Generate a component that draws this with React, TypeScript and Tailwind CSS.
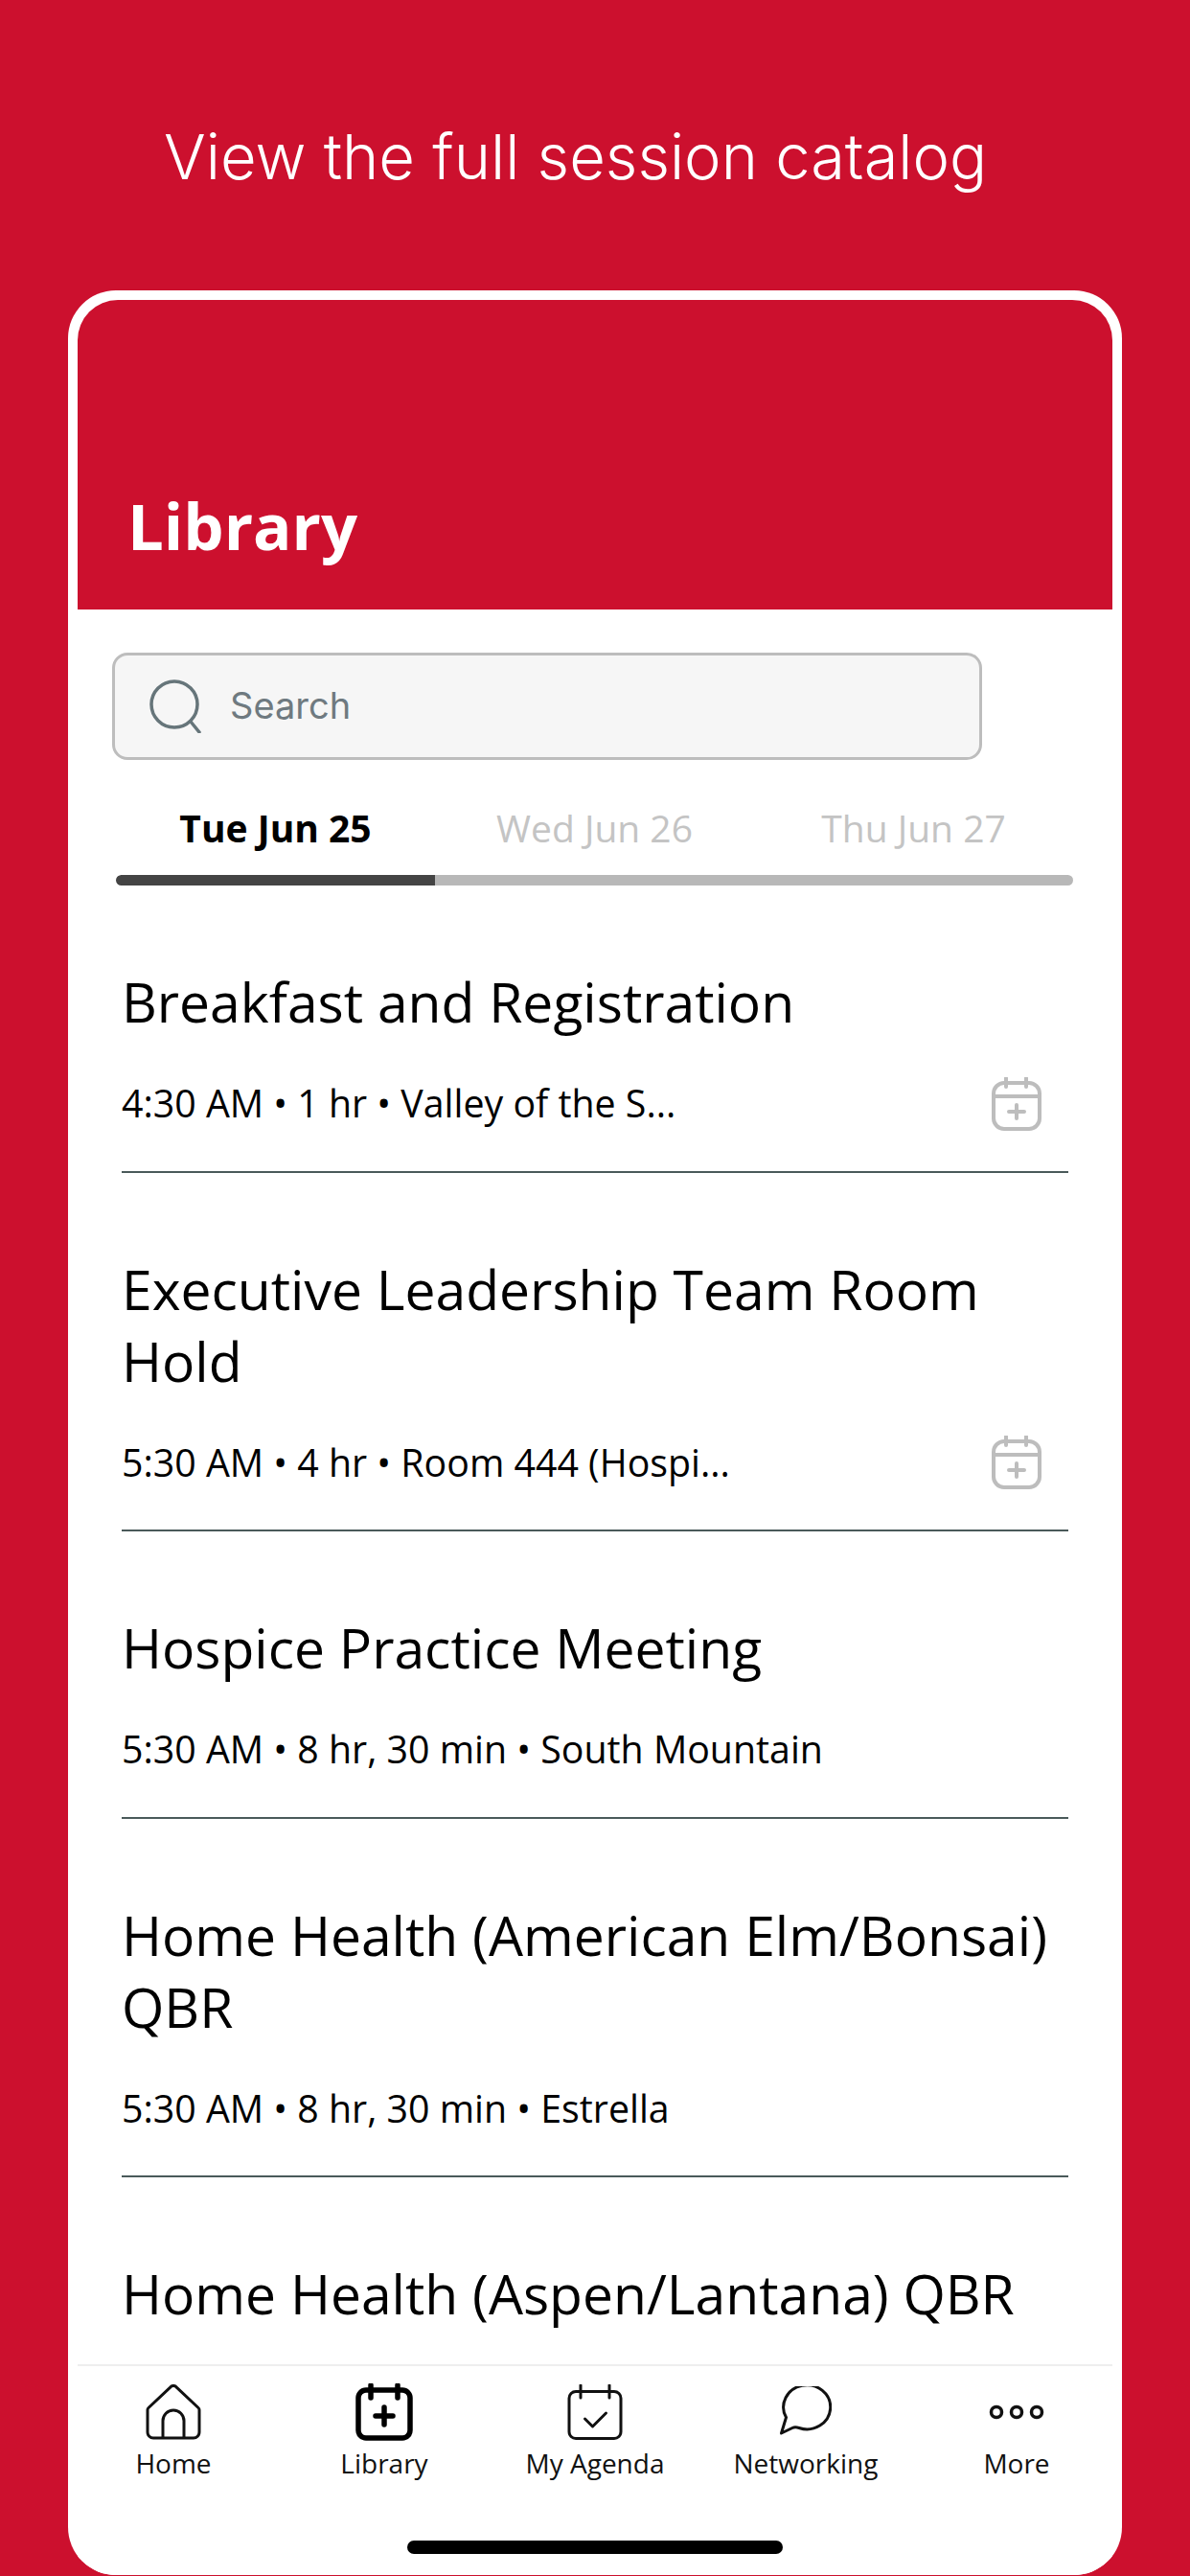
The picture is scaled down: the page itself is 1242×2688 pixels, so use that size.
import React from "react";

const sessions = [
  { title: "Breakfast and Registration", meta: "4:30 AM • 1 hr • Valley of the S...", add: true },
  { title: "Executive Leadership Team Room Hold", meta: "5:30 AM • 4 hr • Room 444 (Hospi...", add: true },
  { title: "Hospice Practice Meeting", meta: "5:30 AM • 8 hr, 30 min • South Mountain", add: false },
  { title: "Home Health (American Elm/Bonsai) QBR", meta: "5:30 AM • 8 hr, 30 min • Estrella", add: false },
  { title: "Home Health (Aspen/Lantana) QBR", meta: "", add: false },
];

const HomeIcon = () => (
  <svg width="58" height="58" viewBox="0 0 58 58" fill="none" stroke="#111" strokeWidth="3" strokeLinejoin="round">
    <path d="M3 24.500 26 2.800a4 4 0 0 1 6 0L55 24.500a3 3 0 0 1 1 2.300V50a6 6 0 0 1-6 6H8a6 6 0 0 1-6-6V26.800a3 3 0 0 1 1-2.300Z" />
    <path d="M18 56V38a11 11 0 0 1 22 0v18" />
  </svg>
);

const LibraryIcon = () => (
  <svg width="60" height="60" viewBox="0 0 60 60" fill="none" stroke="#000" strokeLinecap="round">
    <rect x="3" y="7" width="54" height="50" rx="8" strokeWidth="5.500" />
    <path d="M16 2v13M44 2v13" strokeWidth="5.500" />
    <path d="M30 25v18M21 34h18" strokeWidth="5.500" />
  </svg>
);

const AgendaIcon = () => (
  <svg width="58" height="58" viewBox="0 0 58 58" fill="none" stroke="#111" strokeWidth="3" strokeLinecap="round" strokeLinejoin="round">
    <rect x="2" y="7.500" width="54" height="49" rx="7" />
    <path d="M14 1v13M44 1v13" />
    <path d="M18.500 36l8 8 14-14" />
  </svg>
);

const ChatIcon = () => (
  <svg width="54" height="54" viewBox="0 0 54 54" fill="none" stroke="#111" strokeWidth="3" strokeLinejoin="round">
    <path d="M1.500 49 6.500 32.500A24.500 23 0 1 1 20 43.500C17 42.500 15 42.500 13 43.500Z" />
  </svg>
);

const MoreIcon = () => (
  <svg width="58" height="58" viewBox="0 0 58 58" fill="none" stroke="#111" strokeWidth="3.500">
    <circle cx="8" cy="29" r="5.500" />
    <circle cx="29" cy="29" r="5.500" />
    <circle cx="50" cy="29" r="5.500" />
  </svg>
);

const AddToAgenda = () => (
  <svg width="52" height="56" viewBox="0 0 52 56" fill="none" stroke="#bdbdbd" strokeWidth="4" strokeLinecap="round">
    <rect x="2" y="6" width="48" height="48" rx="11" />
    <path d="M15 1v9M36 1v9" />
    <path d="M2 20h48" strokeLinecap="butt" />
    <path d="M26 29v14M18 36h16" />
  </svg>
);

const tabs = [
  { label: "Home", icon: <HomeIcon /> },
  { label: "Library", icon: <LibraryIcon /> },
  { label: "My Agenda", icon: <AgendaIcon /> },
  { label: "Networking", icon: <ChatIcon /> },
  { label: "More", icon: <MoreIcon /> },
];

export default function App() {
  return (
    <div className="h-[2688px] w-[1242px] flex flex-col overflow-hidden bg-[#cc102e] font-['Open_Sans',sans-serif]">
      <div className="h-[303px] shrink-0 pt-[124px] pl-[171px] font-['Inter',sans-serif] text-[65px] font-light leading-[80px] text-white">
        View the full session catalog
      </div>

      <div className="mx-[71px] mb-px flex min-h-0 flex-1 flex-col overflow-hidden rounded-[50px] bg-white">
        <header className="mx-[10px] mt-[10px] flex h-[323px] shrink-0 items-end rounded-t-[42px] bg-[#cc102e] pb-[42px] pl-[52px]">
          <h1 className="text-[67px] font-bold leading-[92px] text-white">Library</h1>
        </header>

        <div className="mt-[45px] ml-[46px] flex h-[112px] w-[908px] shrink-0 items-center rounded-[16px] border-[3px] border-[#bdbdbd] bg-[#f6f6f6] pl-[36px]">
          <svg width="56" height="56" viewBox="0 0 56 56" fill="none" stroke="#66757a" strokeWidth="3.500" strokeLinecap="round">
            <circle cx="26" cy="26" r="24" />
            <path d="M43 44l9 11" />
          </svg>
          <span className="ml-[28px] -mt-[2px] font-['Inter',sans-serif] text-[38px] text-[#6f7a80]">Search</span>
        </div>

        <div className="mt-[45px] ml-[50px] grid w-[999px] shrink-0 grid-cols-3 text-center text-[39px] leading-[52px]">
          <span className="font-bold text-black">Tue Jun 25</span>
          <span className="text-[#c4c4c4]">Wed Jun 26</span>
          <span className="text-[#c4c4c4]">Thu Jun 27</span>
        </div>

        <div className="mt-[23px] ml-[50px] h-[11px] w-[999px] shrink-0 overflow-hidden rounded-full bg-[#b8b8b8]">
          <div className="h-full w-[333px] rounded-l-full bg-[#444444]" />
        </div>

        <div className="min-h-0 flex-1 overflow-hidden px-[56px]">
          {sessions.map((s) => (
            <div key={s.title} className={s.meta ? "border-b-2 border-[#4a5a5a] pt-[84px] pb-[42.5px]" : "pt-[84px]"}>
              <div className="text-[57px] leading-[75px] text-black">{s.title}</div>
              {s.meta && (
                <div className="mt-[41px] flex h-[55px] items-center justify-between pr-[28px] text-[39.3px] text-black">
                  <span>{s.meta}</span>
                  {s.add && <AddToAgenda />}
                </div>
              )}
            </div>
          ))}
        </div>

        <div className="relative mx-[10px] h-[220px] shrink-0 border-t-2 border-[#eeeeee] bg-white">
          <nav className="-mx-[10px] grid grid-cols-5 pt-[19px]">
            {tabs.map((t) => (
              <div key={t.label} className="flex flex-col items-center">
                <div className="flex h-[58px] items-center justify-center">{t.icon}</div>
                <span className="mt-[3px] text-[28px] leading-[42px] text-[#111111]">{t.label}</span>
              </div>
            ))}
          </nav>
          <div className="absolute bottom-[22px] left-[344px] h-[14px] w-[392px] rounded-full bg-black" />
        </div>
      </div>
    </div>
  );
}
